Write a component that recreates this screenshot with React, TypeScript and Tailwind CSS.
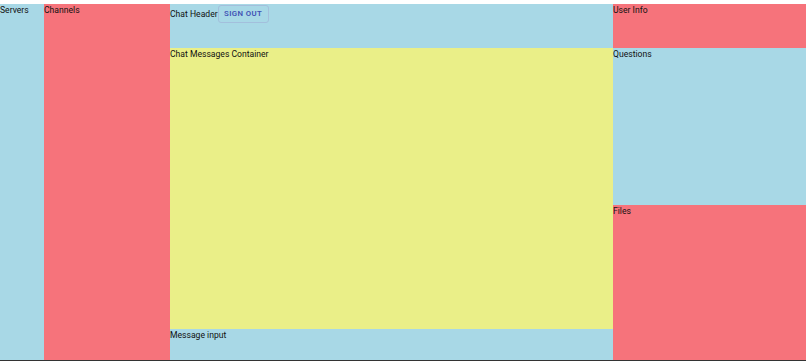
import React from "react";

export default function App() {
  const font = { fontFamily: "Roboto, 'Liberation Sans', sans-serif" };
  return (
    <div className="w-[806px] h-[361px] bg-white flex flex-col text-[8.6px] leading-[12px] text-[#111]" style={font}>
      <div className="h-[4px] shrink-0" />
      <div className="flex flex-1 min-h-0">
        <div className="w-[44px] bg-[#a8d8e6]">Servers</div>
        <div className="w-[126px] bg-[#f6737b]">Channels</div>
        <div className="flex-1 flex flex-col">
          <div className="h-[44px] bg-[#a8d8e6] flex items-start">
            <span className="pt-[4px]">Chat Header</span>
            <button className="mt-[1px] h-[18px] w-[51px] rounded-[3px] border border-[#a3bfdc] text-[#3f51b5] text-[7.8px] font-semibold tracking-[0.4px] flex items-center justify-center">
              SIGN OUT
            </button>
          </div>
          <div className="flex-1 bg-[#eaef88]">Chat Messages Container</div>
          <div className="h-[31px] bg-[#a8d8e6]">Message input</div>
        </div>
        <div className="w-[193px] flex flex-col">
          <div className="h-[44px] bg-[#f6737b]">User Info</div>
          <div className="h-[157px] bg-[#a8d8e6]">Questions</div>
          <div className="flex-1 bg-[#f6737b]">Files</div>
        </div>
      </div>
      <div className="h-[1px] bg-[#333] shrink-0" />
    </div>
  );
}
